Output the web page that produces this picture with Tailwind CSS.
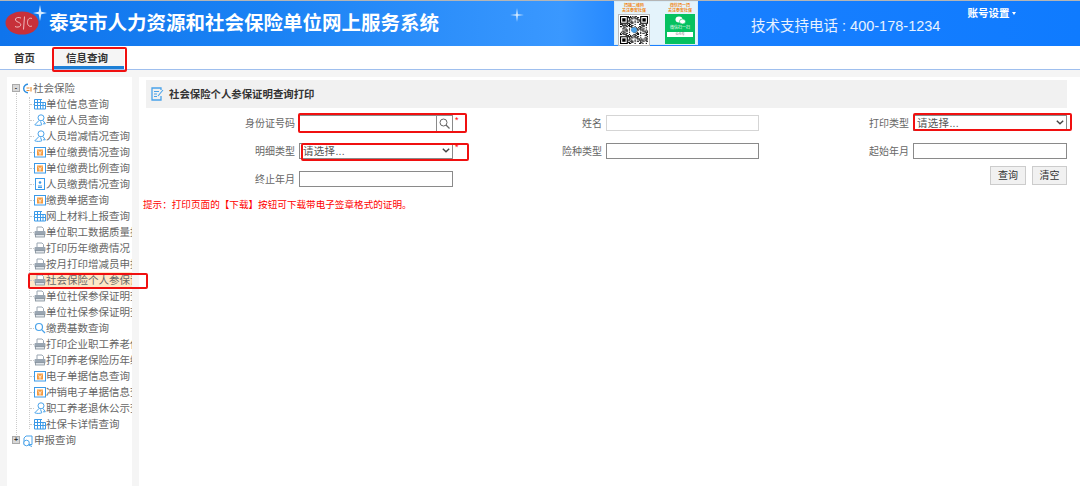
<!DOCTYPE html>
<html lang="zh-CN">
<head>
    <meta charset="UTF-8">
    <meta name="viewport" content="width=device-width, initial-scale=1.0">
    <title>社会保险个人参保证明查询打印</title>
    <script src="https://cdn.jsdelivr.net/npm/@tailwindcss/browser@4"></script>
</head>
<body class="relative w-[1080px] h-[486px] overflow-hidden bg-[#f5f5f5] text-[#666] font-['Liberation_Sans','Noto_Sans_CJK_SC',sans-serif]">
    <svg class="hidden">
        <symbol id="i-table" viewBox="0 0 12 12"><path d="M.5 1.500h7.500M.5 4.500h11M.5 7.500h11M.5 11h11M.5 1.500V11M3.500 1.500V11M6.500 1.500V11M9 4.500V11M11.500 4.500V11" fill="none" stroke="#3b9ae8" stroke-width="1"/></symbol>
        <symbol id="i-user" viewBox="0 0 12 12"><circle cx="7" cy="3.800" r="3" fill="none" stroke="#4aa3ea"/><path d="M5 6.500.8 10.800c2 .8 5 .8 7 0L6.500 7.500M9 6.500l2.300 3.300H9" fill="none" stroke="#4aa3ea"/></symbol>
        <symbol id="i-money" viewBox="0 0 12 12"><rect x="0.500" y="1.500" width="11" height="9.500" fill="#fff" stroke="#3b9ae8"/><rect x="3" y="3.500" width="6" height="6" fill="#f59a3c"/><path d="M4 4.500 6 6.800l2-2.300M6 6.800v2.700M4.500 7h3" stroke="#fff" stroke-width=".7" fill="none"/></symbol>
        <symbol id="i-card" viewBox="0 0 12 12"><rect x="1.500" y="0.500" width="9" height="11" fill="none" stroke="#3b9ae8"/><path d="M4 8h4M4 9.500h4" stroke="#3b9ae8"/><circle cx="6" cy="4.500" r="1.300" fill="#3b9ae8"/></symbol>
        <symbol id="i-print" viewBox="0 0 12 12"><path d="M3 5V1h5l1.500 1.500V5" fill="#fff" stroke="#9aa6b2"/><rect x="0.500" y="5" width="11" height="4.500" rx="1" fill="#9aa6b2"/><rect x="1.500" y="8.500" width="9" height="2.500" fill="#dfe4e9" stroke="#838e9a" stroke-width=".8"/></symbol>
        <symbol id="i-search" viewBox="0 0 12 12"><circle cx="5" cy="5" r="3.500" fill="none" stroke="#4aa3ea" stroke-width="1.200"/><path d="m8 8 3 3" stroke="#4aa3ea" stroke-width="1.300"/></symbol>
        <symbol id="i-report" viewBox="0 0 12 12"><path d="M4 1h6v8.500H2V3Z" fill="none" stroke="#4aa3ea"/><circle cx="4.500" cy="8" r="2.800" fill="#fff" stroke="#4aa3ea"/><path d="m6.500 10 3.500 1.500" stroke="#4aa3ea"/></symbol>
        <symbol id="i-chevron" viewBox="0 0 8 5"><path d="m.8.8 3.200 3 3.200-3" fill="none" stroke="#444" stroke-width="1.400"/></symbol>
    </svg>

    <header class="h-[46px] border-t border-[#b5b5b5] flex bg-[linear-gradient(90deg,#0f74ec_0%,#1a82f4_25%,#3a98ff_52%,#1a80ff_60%,#0f7bff_100%)]">
        <div class="relative w-[614px] flex items-center shrink-0">
            <svg class="absolute left-[4px] top-[3px]" width="46" height="34" viewBox="0 0 46 34">
                <ellipse cx="18" cy="19" rx="16.500" ry="11.500" fill="#c7303a"/>
                <path d="M17 14c-2.500-1-5-.5-5.500 1s1 2.500 2.800 3.200 3 2 2.200 3.500-3.800 1.800-5.500.8" fill="none" stroke="#f3c9cc" stroke-width=".9"/>
                <path d="M20.500 12.500 19.500 25.500" fill="none" stroke="#f3c9cc" stroke-width=".9"/>
                <path d="M28 14.500c-2.500-1-4.500.5-4.500 4s2.500 4.500 4.500 3.500" fill="none" stroke="#f3c9cc" stroke-width=".9"/>
                <path d="M36 1l1.300 6.700L43 9l-5.700 1.300L36 17l-1.300-6.700L29 9l5.700-1.300Z" fill="#d8ecff"/>
            </svg>
            <h1 class="ml-[49px] text-[19.500px] leading-none font-bold text-white whitespace-nowrap">泰安市人力资源和社会保险单位网上服务系统</h1>
            <svg class="absolute left-[510px] top-[7px]" width="14" height="14" viewBox="0 0 18 18"><path d="M9 0l1.100 7.900L18 9l-7.900 1.100L9 18l-1.100-7.900L0 9l7.900-1.100Z" fill="#d5ebff"/></svg>
        </div>

        <div class="w-[84px] h-[44px] shrink-0 bg-[#e4f3fb] flex gap-[15px] pl-[3px] pt-[2px] border border-[#d8ecf7]">
            <div class="w-[32px] flex flex-col items-center">
                <p class="text-[4px] leading-[4.500px] text-[#f08a24] text-center whitespace-nowrap font-bold">扫描二维码<br>关注泰安社保</p>
                <div class="mt-[1px] p-[1px] bg-white border border-[#bbb]">
                    <svg id="qr" class="block" width="28" height="28" viewBox="0 0 25 25"></svg>
                </div>
            </div>
            <div class="w-[30px] flex flex-col items-center">
                <p class="text-[4px] leading-[4.500px] text-[#f08a24] text-center whitespace-nowrap font-bold">微信扫一扫<br>关注泰安社保</p>
                <div class="w-[30px] h-[30px] mt-[1px] bg-[#06c160] flex flex-col items-center">
                    <svg class="mt-[2px]" width="11" height="9" viewBox="0 0 11 9"><ellipse cx="4" cy="3.500" rx="3.500" ry="3" fill="#fff"/><ellipse cx="7.500" cy="5.500" rx="3" ry="2.500" fill="#fff" stroke="#06c160" stroke-width=".6"/></svg>
                    <span class="text-[4px] leading-[6px] text-white whitespace-nowrap">微信扫一扫</span>
                    <span class="w-[26px] h-[5px] mt-[1px] bg-white text-[3px] leading-[5px] text-[#666] text-center whitespace-nowrap">公众号</span>
                </div>
            </div>
        </div>

        <p class="ml-[53px] mt-[15px] text-[14.500px] leading-[20px] text-white/90 whitespace-nowrap">技术支持电话 : 400-178-1234</p>
        <div class="ml-[27px] mt-[5px] h-[14px] flex items-center gap-[2px] text-[10.500px] leading-[14px] font-bold text-white whitespace-nowrap">
            账号设置
            <span class="w-0 h-0 ml-[1px] border-x-[2.500px] border-t-[3px] border-x-transparent border-t-white"></span>
        </div>
    </header>

    <nav class="h-[24px] bg-white border-b border-[#9fbfee] flex text-[10.500px] font-bold text-[#333]">
        <a href="#" class="w-[54px] pl-[14px] pt-[5px] leading-[14px]">首页</a>
        <a href="#" class="w-[70px] mt-[2px] h-[21px] pl-[12px] pt-[3px] leading-[14px] bg-[#f5f5f5] border-b-[3px] border-[#1c7fd6]">信息查询</a>
    </nav>

    <div class="flex pt-[7px] h-[416px]">
        <aside class="relative ml-[7px] w-[125px] h-full bg-white overflow-hidden text-[10.500px] leading-[16px] text-[#666]">
            <div class="absolute left-[9px] top-[16px] h-[348px] border-l border-dotted border-[#ccc]"></div>
            <div class="absolute left-[22px] top-[20px] h-[332px] border-l border-dotted border-[#ccc]"></div>
            <ul id="tree" class="relative pt-[3px]"></ul>
        </aside>

        <main class="ml-[7px] flex-1 h-full bg-white pl-[7px] pr-[13px] pt-[3px]">
            <div class="h-[28px] bg-[#f1f1f1] flex items-center pl-[5px] pt-[2px] gap-[5px]">
                <svg class="-mt-[3px]" width="13" height="14" viewBox="0 0 13 14"><path d="M10 3V1H1v12h9V9" fill="none" stroke="#4aa3ea" stroke-width="1.300"/><path d="M3 4.500h5M3 7h3M3 9.500h3M7 9l5-6" fill="none" stroke="#4aa3ea" stroke-width="1.100"/></svg>
                <h2 class="text-[10.400px] font-bold text-[#333] whitespace-nowrap">社会保险个人参保证明查询打印</h2>
            </div>

            <form class="mt-[7px] grid grid-cols-[153px_154px_153px_153px_154px_154px] auto-rows-[28px] text-[10px]">
                <label class="h-[16px] flex items-center justify-end pr-[4px]">身份证号码</label>
                <div class="relative h-[17px] flex border border-[#8a8a8a]">
                    <input class="flex-1 min-w-0 outline-none">
                    <span class="w-[16px] border-l border-[#8a8a8a] flex items-center justify-center">
                        <svg width="11" height="11" viewBox="0 0 11 11"><circle cx="4.500" cy="4.500" r="3.500" fill="none" stroke="#666"/><path d="m7 7 3.500 3.500" stroke="#666" stroke-width="1.300"/></svg>
                    </span>
                    <span class="absolute left-[155px] -top-[1px] text-[9px] leading-[10px] text-[#f00]">*</span>
                </div>
                <label class="h-[16px] flex items-center justify-end pr-[4px]">姓名</label>
                <input class="h-[16px] border border-[#d5d5d5] outline-none">
                <label class="h-[16px] flex items-center justify-end pr-[4px]">打印类型</label>
                <div class="relative h-[16px]">
                    <select class="appearance-none w-full h-full pl-[3px] border border-[#8a8a8a] text-[10.500px] tracking-[0.300px] text-[#555] bg-white">
                        <option>请选择...</option>
                    </select>
                    <svg class="absolute right-[3px] top-[5px]" width="8" height="5"><use href="#i-chevron"/></svg>
                </div>

                <label class="h-[16px] flex items-center justify-end pr-[4px]">明细类型</label>
                <div class="relative h-[16px]">
                    <select class="appearance-none w-full h-full pl-[3px] border border-[#8a8a8a] text-[10.500px] tracking-[0.300px] text-[#555] bg-white">
                        <option>请选择...</option>
                    </select>
                    <svg class="absolute right-[3px] top-[5px]" width="8" height="5"><use href="#i-chevron"/></svg>
                    <span class="absolute left-[156px] -top-[1px] text-[9px] leading-[10px] text-[#f00]">*</span>
                </div>
                <label class="h-[16px] flex items-center justify-end pr-[4px]">险种类型</label>
                <input class="h-[16px] border border-[#8a8a8a] outline-none">
                <label class="h-[16px] flex items-center justify-end pr-[4px]">起始年月</label>
                <input class="h-[16px] border border-[#8a8a8a] outline-none">

                <label class="h-[16px] flex items-center justify-end pr-[4px]">终止年月</label>
                <input class="h-[16px] border border-[#8a8a8a] outline-none">
                <div class="col-span-4 flex justify-end gap-[6px] -mt-[5px]">
                    <button type="button" class="w-[36px] h-[19px] bg-[#f1f1f1] border border-[#ccc] text-[10px] text-[#333]">查询</button>
                    <button type="button" class="w-[35px] h-[19px] bg-[#f1f1f1] border border-[#ccc] text-[10px] text-[#333]">清空</button>
                </div>
            </form>
            <p class="-ml-[3px] -mt-[1px] text-[9.600px] leading-[14px] text-[#f00] whitespace-nowrap">提示：打印页面的【下载】按钮可下载带电子签章格式的证明。</p>
        </main>
    </div>

    <!-- 红色标注框 -->
    <div class="absolute left-[52px] top-[47px] w-[75px] h-[25px] border-2 border-[#f01010] rounded-[2px]"></div>
    <div class="absolute left-[28px] top-[273px] w-[120px] h-[16px] border-2 border-[#f01010] rounded-[2px]"></div>
    <div class="absolute left-[298px] top-[113px] w-[169px] h-[20px] border-2 border-[#f01010] rounded-[2px]"></div>
    <div class="absolute left-[301px] top-[143px] w-[168px] h-[18px] border-2 border-[#f01010] rounded-[2px]"></div>
    <div class="absolute left-[913px] top-[113px] w-[159px] h-[18px] border-2 border-[#f01010] rounded-[2px]"></div>

    <script>
        // 左侧菜单
        const menu = [
            ['i-table', '单位信息查询'], ['i-user', '单位人员查询'], ['i-user', '人员增减情况查询'],
            ['i-money', '单位缴费情况查询'], ['i-money', '单位缴费比例查询'], ['i-card', '人员缴费情况查询'],
            ['i-money', '缴费单据查询'], ['i-table', '网上材料上报查询'], ['i-print', '单位职工数据质量报告打印'],
            ['i-print', '打印历年缴费情况'], ['i-print', '按月打印增减员申报表'], ['i-print', '社会保险个人参保证明查询打印', true],
            ['i-print', '单位社保参保证明查询打印'], ['i-print', '单位社保参保证明查询打印'], ['i-search', '缴费基数查询'],
            ['i-print', '打印企业职工养老保险'], ['i-print', '打印养老保险历年缴费'], ['i-money', '电子单据信息查询'],
            ['i-money', '冲销电子单据信息查询'], ['i-user', '职工养老退休公示查询'], ['i-table', '社保卡详情查询']
        ];

        function toggle(sign) {
            return `<span class="absolute left-[5px] top-[4px] w-[8px] h-[8px] bg-[#d8d8d8] border border-[#aaa] text-[#333] text-[7px] leading-[6px] text-center font-bold">${sign}</span>`;
        }

        const tree = document.getElementById('tree');
        let html = `<li class="relative h-[16px] pl-[26px] whitespace-nowrap">${toggle('-')}
            <svg class="absolute left-[15px] top-[3px]" width="11" height="11" viewBox="0 0 11 11"><path d="M6 1.200A4.300 4.300 0 1 0 6 9.800" fill="none" stroke="#2f8fe0" stroke-width="1.400"/><path d="M4.500 5h3M4.500 7.500h3M9 4v4.500" fill="none" stroke="#e8923a" stroke-width="1.200"/></svg>社会保险</li>`;
        menu.forEach(item => {
            const row = item[2] ? 'before:absolute before:left-[23px] before:right-0 before:inset-y-0 before:bg-[#fde8c8]' : '';
            html += `<li class="relative h-[16px] pl-[39px] whitespace-nowrap ${row}">
                <span class="absolute left-[23px] top-[8px] w-[4px] border-t border-dotted border-[#ccc]"></span>
                <svg class="relative float-left -ml-[12px] mt-[2px]" width="12" height="12"><use href="#${item[0]}"/></svg><span class="relative">${item[1]}</span></li>`;
        });
        html += `<li class="relative h-[16px] pl-[27px] whitespace-nowrap">${toggle('+')}
            <svg class="absolute left-[15px] top-[3px]" width="12" height="12"><use href="#i-report"/></svg>申报查询</li>`;
        tree.innerHTML = html;

        // 二维码图案
        const qr = document.getElementById('qr');
        let cells = '';
        let seed = 7;
        for (let y = 0; y < 25; y++) {
            for (let x = 0; x < 25; x++) {
                seed = (seed * 73 + 41) % 1021;
                const finder = (x < 7 && y < 7) || (x > 17 && y < 7) || (x < 7 && y > 17);
                if (!finder && seed % 2) cells += `<rect x="${x}" y="${y}" width="1" height="1"/>`;
            }
        }
        [[0, 0], [18, 0], [0, 18]].forEach(p => {
            cells += `<path d="M${p[0]} ${p[1]}h7v7h-7Zm1 1v5h5v-5Z" fill-rule="evenodd"/><rect x="${p[0] + 2}" y="${p[1] + 2}" width="3" height="3"/>`;
        });
        cells += '<circle cx="12.5" cy="12.5" r="2.500" fill="#4aa3ea"/>';
        qr.innerHTML = cells;
    </script>
</body>
</html>
